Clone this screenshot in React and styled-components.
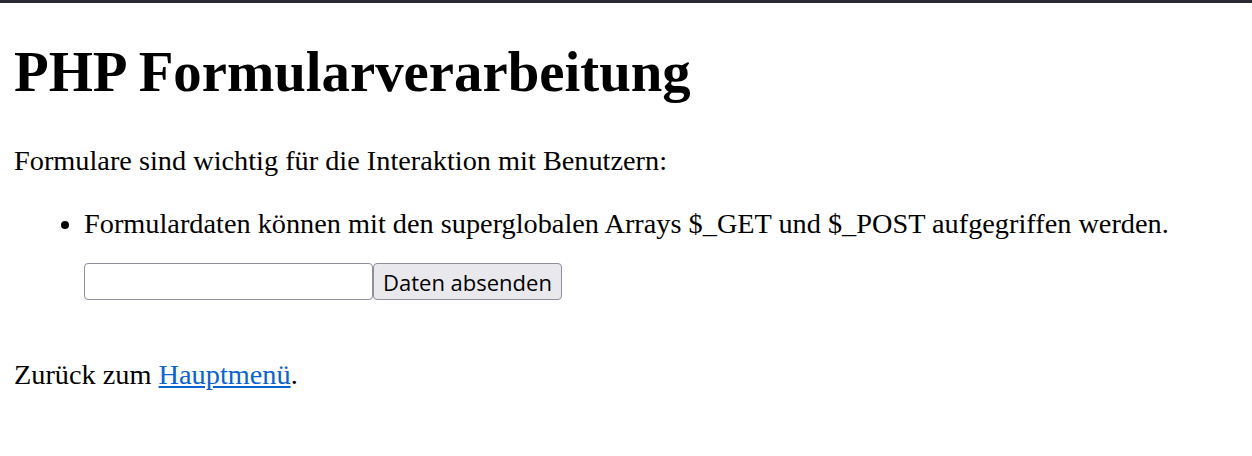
import React from "react"
import styled, { createGlobalStyle } from "styled-components"

const GlobalStyle = createGlobalStyle`
  html {
    border-top: 3px solid #2b2a33;
    background: #ffffff;
  }
  body {
    margin: 0 14px 14px;
    font-family: "Liberation Serif", "Times New Roman", serif;
    font-size: 28.3px;
    line-height: 35px;
    color: #000000;
  }
`

const Title = styled.h1`
  font-size: 56.8px;
  line-height: 70px;
  font-weight: bold;
  margin: 34px 0 36px;
`

const Text = styled.p`
  margin: 28px 0;
`

const List = styled.ul`
  margin: 28px 0;
  padding-left: 70px;
`

const Item = styled.li`
  list-style: disc;
`

const Form = styled.form`
  display: flex;
  align-items: stretch;
  margin: 22px 0 57px;
`

const Field = styled.input`
  box-sizing: border-box;
  width: 289px;
  height: 37px;
  padding: 2px 4px;
  border: 1px solid #8f8f9d;
  border-radius: 4px;
  background: #ffffff;
  font-size: 23px;
`

const Button = styled.button`
  box-sizing: border-box;
  height: 37px;
  padding: 0 9px;
  border: 1px solid #8f8f9d;
  border-radius: 4px;
  background: #e9e9ed;
  color: #000000;
  font-family: "Open Sans", "Noto Sans", sans-serif;
  font-size: 22px;
`

const Link = styled.a`
  color: #0b63d1;
  text-decoration: underline;
`

export default function App() {
  return (
    <>
      <GlobalStyle />
      <Title>PHP Formularverarbeitung</Title>
      <Text>Formulare sind wichtig für die Interaktion mit Benutzern:</Text>
      <List>
        <Item>
          Formulardaten können mit den superglobalen Arrays $_GET und $_POST aufgegriffen werden.
          <Form onSubmit={e => e.preventDefault()}>
            <Field type="text" />
            <Button type="submit">Daten absenden</Button>
          </Form>
        </Item>
      </List>
      <Text>
        Zurück zum <Link href="#">Hauptmenü</Link>.
      </Text>
    </>
  )
}
